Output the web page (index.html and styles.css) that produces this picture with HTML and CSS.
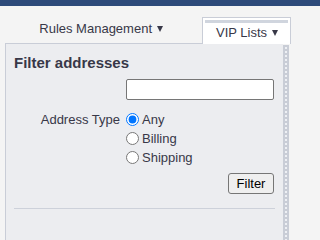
FILE: index.html
```html
<!DOCTYPE html>
<html>
<head>
<meta charset="utf-8">
<link rel="stylesheet" href="styles.css">
</head>
<body>
<div class="topbar"></div>
<div class="page">
  <nav class="tabs">
    <div class="tab">Rules Management<span class="caret"></span></div>
    <div class="tab active">
      <div class="strip"></div>
      <div class="tab-label">VIP Lists<span class="caret"></span></div>
    </div>
  </nav>
  <div class="panel">
    <div class="panel-body">
      <h2 class="title">Filter addresses</h2>
      <div class="form">
        <div class="cell"></div>
        <input class="text" type="text">
        <div class="label">Address Type</div>
        <div class="radios">
          <label class="radio"><input type="radio" name="t" checked>Any</label>
          <label class="radio"><input type="radio" name="t">Billing</label>
          <label class="radio"><input type="radio" name="t">Shipping</label>
        </div>
        <div class="cell"></div>
        <div class="actions"><button class="btn">Filter</button></div>
      </div>
      <div class="rule"></div>
    </div>
    <div class="grip"></div>
  </div>
</div>
</body>
</html>
```
FILE: styles.css
```css
html, body {
  margin: 0;
  padding: 0;
  background: #f4f4f4;
  font-family: "Liberation Sans", Arial, sans-serif;
  font-size: 13px;
  color: #383848;
  overflow: hidden;
}
.page {
  width: 296px;
}
.topbar {
  height: 6px;
  background: #2d4a7a;
}
.tabs {
  height: 37px;
  display: flex;
  justify-content: flex-end;
  align-items: flex-end;
  padding-right: 5px;
}
.tab {
  padding: 0 12px 6px;
  line-height: 17px;
  margin-right: 27px;
  white-space: nowrap;
}
.caret {
  display: inline-block;
  width: 0;
  height: 0;
  margin-left: 5px;
  border-left: 3px solid transparent;
  border-right: 3px solid transparent;
  border-top: 6px solid #383848;
  vertical-align: 1px;
}
.tab.active {
  box-sizing: border-box;
  width: 89px;
  height: 27px;
  margin: 0 0 -1px 0;
  padding: 2px 2px 0;
  background: #ffffff;
  border: 1px solid #c9cdd7;
  border-bottom: none;
  position: relative;
  z-index: 1;
}
.strip {
  height: 3px;
  background: #d0d5de;
}
.tab-label {
  padding: 1px 0 0 11px;
  line-height: 17px;
}
.panel {
  margin-left: 5px;
  width: 283px;
  border-top: 1px solid #c9cdd7;
  border-left: 1px solid #c9cdd7;
  display: flex;
  height: 200px;
}
.panel-body {
  flex: 1;
  background: #ecedf0;
  padding: 10px 8px 0 8px;
}
.grip {
  width: 6px;
  margin-top: 1px;
  background-color: #c9cdd6;
  background-image: radial-gradient(circle, #eef0f4 0.9px, transparent 1.1px);
  background-size: 6px 4px;
  background-position: 0 1px;
}
.title {
  margin: 0;
  font-size: 15px;
  font-weight: bold;
  line-height: 17px;
  color: #383848;
}
.form {
  margin-top: 8px;
  display: grid;
  grid-template-columns: 106px 1fr;
  column-gap: 6px;
}
.text {
  box-sizing: border-box;
  height: 21px;
  width: 148px;
  margin: 0;
  border: 1px solid #767676;
  border-radius: 2px;
  background: #fff;
}
.label {
  margin-top: 10px;
  text-align: right;
  line-height: 19px;
}
.radios {
  margin-top: 10px;
  display: flex;
  flex-direction: column;
}
.radio {
  display: flex;
  align-items: center;
  height: 19px;
  line-height: 19px;
}
.radio input {
  width: 13px;
  height: 13px;
  margin: 0 3px 0 0;
}
.actions {
  margin-top: 6px;
  width: 148px;
  display: flex;
  justify-content: flex-end;
}
.btn {
  box-sizing: border-box;
  width: 46px;
  height: 21px;
  padding: 0;
  font-family: "Liberation Sans", Arial, sans-serif;
  font-size: 13px;
  color: #000;
  background: #efefef;
  border: 1px solid #767676;
  border-radius: 3px;
}
.rule {
  margin-top: 14px;
  border-top: 1px solid #cdd1da;
}
```
